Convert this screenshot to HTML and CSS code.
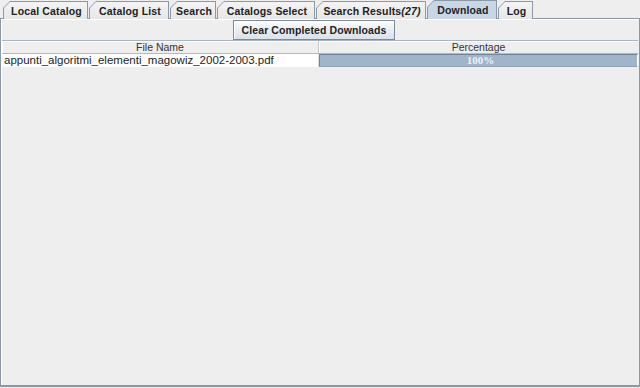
FILE: index.html
```html
<!DOCTYPE html>
<html>
<head>
<meta charset="utf-8">
<link rel="stylesheet" href="styles.css">
</head>
<body>
<div class="window">
  <div class="tabs">
    <div class="tab w-local"><span class="tab-in">Local Catalog</span></div>
    <div class="tab w-list"><span class="tab-in">Catalog List</span></div>
    <div class="tab w-search"><span class="tab-in">Search</span></div>
    <div class="tab w-select"><span class="tab-in">Catalogs Select</span></div>
    <div class="tab w-results"><span class="tab-in">Search Results<i>(27)</i></span></div>
    <div class="tab w-download selected"><span class="tab-in">Download</span></div>
    <div class="tab w-log"><span class="tab-in">Log</span></div>
  </div>
  <div class="panel">
    <div class="toolbar">
      <button class="btn">Clear Completed Downloads</button>
    </div>
    <div class="table">
      <div class="thead">
        <div class="th c1">File Name</div>
        <div class="th c2">Percentage</div>
      </div>
      <div class="row">
        <div class="td c1">appunti_algoritmi_elementi_magowiz_2002-2003.pdf</div>
        <div class="td c2 progress"><span class="pct">100%</span></div>
      </div>
    </div>
  </div>
</div>
</body>
</html>
```

FILE: styles.css
```css
* { box-sizing: border-box; }
html, body { margin: 0; padding: 0; }
body {
  width: 640px;
  height: 388px;
  background: #eeeeee;
  font-family: "Liberation Sans", Arial, sans-serif;
  overflow: hidden;
}
.window {
  display: flex;
  flex-direction: column;
  height: 388px;
}
.tabs {
  display: flex;
  align-items: flex-end;
  padding: 1px 0 0 3px;
  height: 19px;
  position: relative;
  z-index: 1;
}
.tab {
  height: 18px;
  margin-right: 1px;
  background: #8a99a8;
  clip-path: polygon(7px 0, 100% 0, 100% 100%, 0 100%, 0 7px);
  padding: 1px 1px 0 1px;
}
.w-local { width: 85px; }
.w-list { width: 80px; }
.w-search { width: 46px; }
.w-select { width: 98px; }
.w-results { width: 110px; }
.w-download { width: 70px; }
.w-log { width: 35px; }
.tab-in {
  display: flex;
  align-items: center;
  justify-content: center;
  height: 17px;
  padding: 0 0 0 2px;
  background: linear-gradient(#f4f4f4, #e6e6e6);
  clip-path: polygon(6px 0, 100% 0, 100% 100%, 0 100%, 0 6px);
  font-weight: bold;
  font-size: 10.5px;
  letter-spacing: 0.15px;
  color: #222;
  white-space: nowrap;
}
.tab-in i { font-style: italic; }
.tab.selected { height: 19px; }
.tab.selected .tab-in {
  height: 18px;
  background: #c8d7e6;
}
.panel {
  flex: 1;
  margin-top: -1px;
  border: 1px solid #8a99a8;
  border-bottom: 2px solid #8a99a8;
  box-shadow: inset 1px 1px 0 #ffffff;
  display: flex;
  flex-direction: column;
  margin-bottom: 1px;
}
.toolbar {
  display: flex;
  justify-content: center;
  padding: 1px 0 0 0;
  height: 21px;
}
.btn {
  width: 162px;
  height: 20px;
  margin-left: -12px;
  border: 1px solid #7a8a99;
  background: linear-gradient(#fbfcfd 0%, #e9edf2 50%, #d9e1ea 100%);
  box-shadow: inset 1px 1px 0 #ffffff;
  font-family: "Liberation Sans", Arial, sans-serif;
  font-weight: bold;
  font-size: 10.5px;
  letter-spacing: 0.1px;
  color: #222;
  padding: 0;
}
.table {
  flex: 1;
  margin: 0 1px 0 1px;
  border-top: 1px solid #a8b4c0;
  display: flex;
  flex-direction: column;
}
.thead {
  display: flex;
  height: 13px;
  border-bottom: 1px solid #b8b8b8;
  background: #eeeeee;
}
.th {
  font-size: 10.5px;
  color: #333;
  text-align: center;
  line-height: 12px;
  box-shadow: inset 1px 1px 0 #ffffff;
}
.c1 { width: 317px; border-right: 1px solid #c4c4c4; }
.c2 { flex: 1; }
.row {
  display: flex;
  height: 13px;
}
.td {
  color: #222;
  white-space: nowrap;
  overflow: hidden;
}
.row .c1 {
  background: #ffffff;
  padding-left: 2px;
  font-size: 11.5px;
  line-height: 13px;
  border-right: 1px solid #e0e0e0;
}
.progress {
  background: #a1b5ca;
  border-top: 1px solid #6f859c;
  border-left: 1px solid #6f859c;
  border-bottom: 1px solid #8ea3b9;
  border-right: 1px solid #ffffff;
  display: flex;
  align-items: center;
  justify-content: center;
}
.pct {
  font-family: "Liberation Serif", serif;
  font-weight: bold;
  font-size: 11px;
  color: #eef3f9;
  line-height: 11px;
  padding-left: 4px;
}
```
